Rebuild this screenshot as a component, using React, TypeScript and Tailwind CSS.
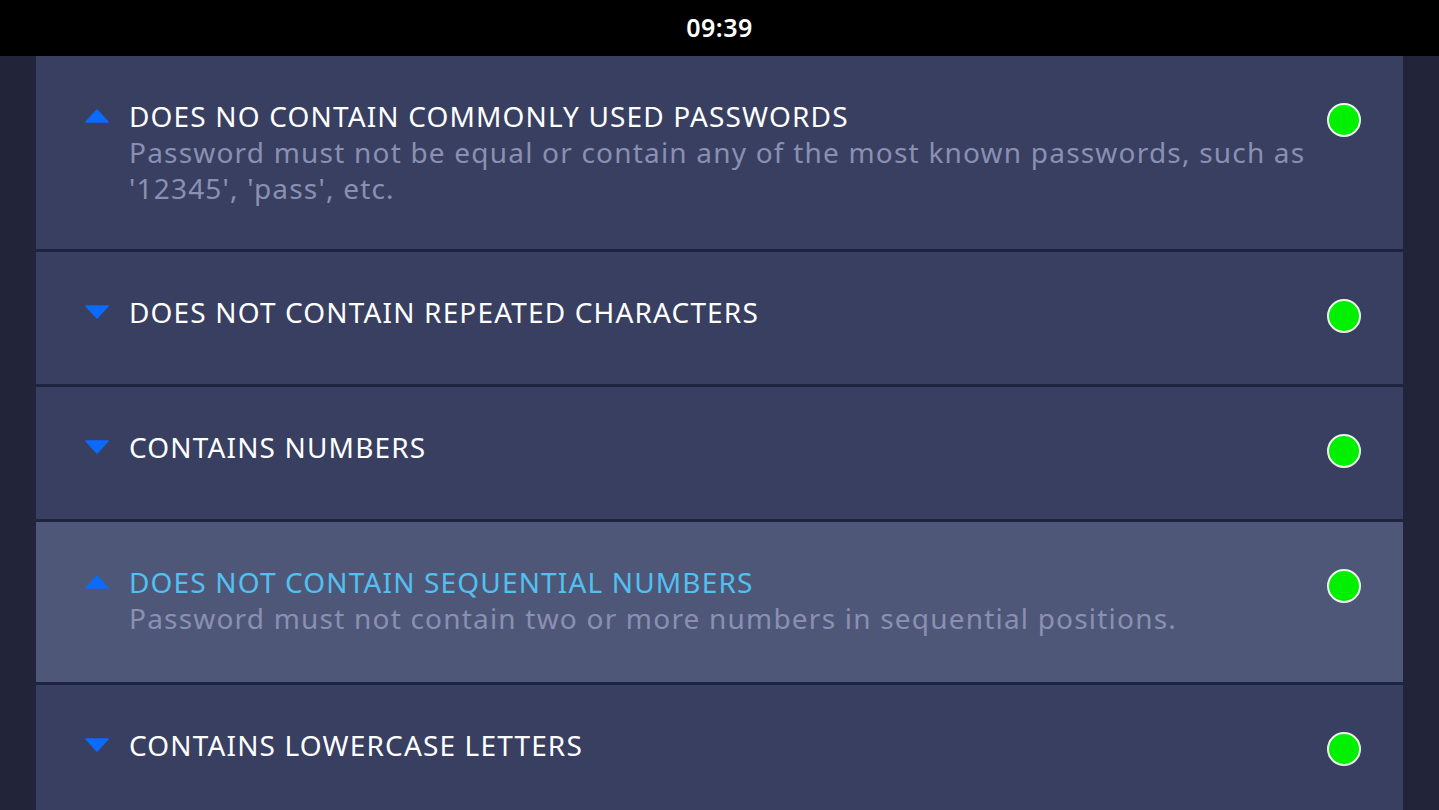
import { useState } from "react";

type Rule = { title: string; description?: string; expanded: boolean; height: string };

const rules: Rule[] = [
  {
    title: "DOES NO CONTAIN COMMONLY USED PASSWORDS",
    description:
      "Password must not be equal or contain any of the most known passwords, such as '12345', 'pass', etc.",
    expanded: true,
    height: "min-h-[193px]",
  },
  { title: "DOES NOT CONTAIN REPEATED CHARACTERS", expanded: false, height: "min-h-[132px]" },
  { title: "CONTAINS NUMBERS", expanded: false, height: "min-h-[132px]" },
  {
    title: "DOES NOT CONTAIN SEQUENTIAL NUMBERS",
    description:
      "Password must not contain two or more numbers in sequential positions.",
    expanded: true,
    height: "min-h-[160px]",
  },
  { title: "CONTAINS LOWERCASE LETTERS", expanded: false, height: "min-h-[132px]" },
];

const Arrow = ({ up }: { up: boolean }) => (
  <svg width="24" height="14" viewBox="0 0 24 14" className="shrink-0">
    {up ? (
      <path d="M12 1 L23 13 L1 13 Z" fill="#0b6bff" stroke="#0b6bff" strokeLinejoin="round" strokeWidth="1.5" />
    ) : (
      <path d="M1 1 L23 1 L12 13 Z" fill="#0b6bff" stroke="#0b6bff" strokeLinejoin="round" strokeWidth="1.5" />
    )}
  </svg>
);

const App = () => {
  const [focused] = useState(3);

  return (
    <div
      className="w-[1439px] h-[810px] overflow-hidden bg-[#22253a] flex flex-col"
      style={{ fontFamily: '"Noto Sans", "Open Sans", sans-serif' }}
    >
      <div className="h-[56px] shrink-0 bg-black flex items-center justify-center">
        <span className="text-white text-[25px] font-semibold tracking-[0.5px]">09:39</span>
      </div>

      <div className="flex-1 mx-[36px] bg-[#1e2440] flex flex-col gap-[3px] overflow-hidden">
        {rules.map((rule, i) => {
          const active = i === focused;
          return (
            <div
              key={rule.title}
              className={`shrink-0 flex items-start pt-[42px] pl-[49px] pr-[42px] ${rule.height} ${
                active ? "bg-[#4f5779]" : "bg-[#383f61]"
              }`}
            >
              <div className="w-[44px] h-[36px] flex items-center shrink-0">
                <Arrow up={rule.expanded} />
              </div>
              <div className="flex-1 flex flex-col">
                <div
                  className={`text-[28px] leading-[36px] tracking-[1.15px] ${
                    active ? "text-[#52c0f0]" : "text-white"
                  }`}
                >
                  {rule.title}
                </div>
                {rule.description && (
                  <div className="text-[28px] leading-[36px] tracking-[1.2px] text-[#8a90b2] pr-[10px]">
                    {rule.description}
                  </div>
                )}
              </div>
              <div className="w-[34px] h-[34px] mt-[5px] rounded-full bg-[#00f000] border-[2.5px] border-[#eef6ee] shrink-0" />
            </div>
          );
        })}
      </div>
    </div>
  );
};

export default App;
